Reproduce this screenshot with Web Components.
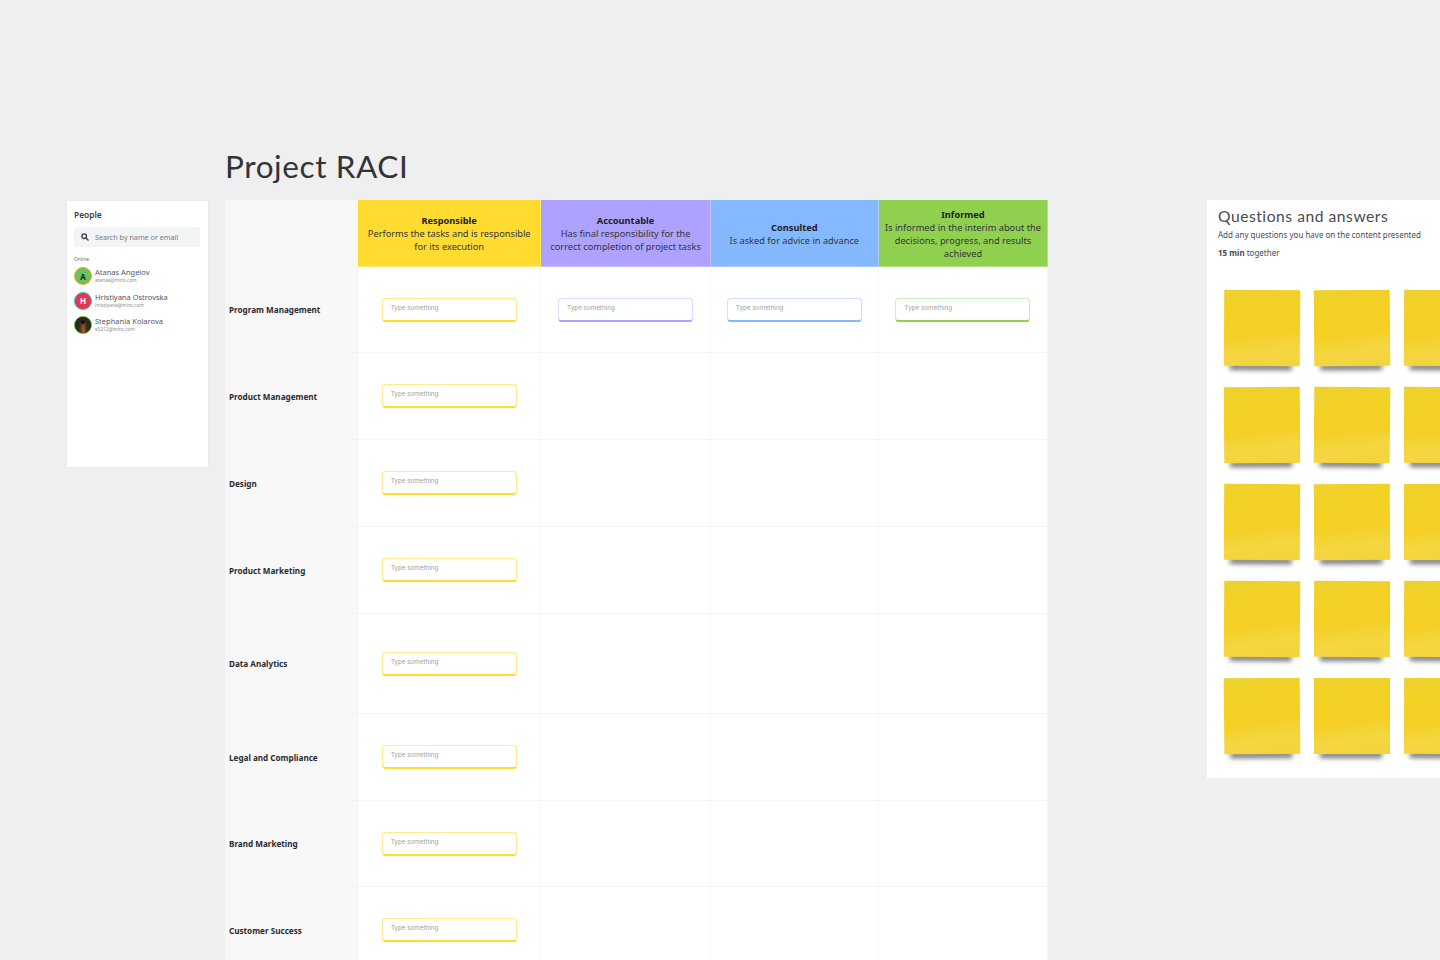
<!DOCTYPE html>
<html lang="en">
<head>
<meta charset="utf-8">
<title>Project RACI</title>
<style>
html, body {
  margin: 0;
  height: 960px;
  overflow: hidden;
  background: #efefef;
}
</style>
</head>
<body>
<raci-board></raci-board>

<script>
/* Small helper, every element below is just a shadow root with a template */
function makeTemplate (html) {
  const t = document.createElement('template')
  t.innerHTML = html
  return t
}

const personTemplate = makeTemplate(`
<style>
:host { display: flex; align-items: center; gap: 3px; height: 18px; }
#avatar {
  width: 18px;
  height: 18px;
  box-sizing: border-box;
  border-radius: 50%;
  border: 1.5px solid var(--ring, #f5a623);
  display: flex;
  align-items: center;
  justify-content: center;
  overflow: hidden;
  font: 700 8px "Noto Sans", sans-serif;
  flex: none;
}
#name { font: 400 7.5px/9px "Noto Sans", sans-serif; color: #55555c; margin-top: -1px; }
#mail { font: 400 4.9px/6px "Noto Sans", sans-serif; color: #8a8d9e; }
svg { display: block; width: 100%; height: 100%; }
</style>
<div id="avatar"><slot name="avatar"></slot></div>
<div>
  <div id="name"></div>
  <div id="mail"></div>
</div>`)

class RaciPerson extends HTMLElement {
  constructor () {
    super()
    this.attachShadow({ mode: 'open' }).appendChild(personTemplate.content.cloneNode(true))
  }

  connectedCallback () {
    const avatar = this.shadowRoot.getElementById('avatar')
    this.shadowRoot.getElementById('name').textContent = this.getAttribute('name')
    this.shadowRoot.getElementById('mail').textContent = this.getAttribute('mail')
    avatar.style.setProperty('--ring', this.getAttribute('ring'))
    avatar.style.background = this.getAttribute('fill')
    avatar.style.color = this.getAttribute('ink')
    if (this.hasAttribute('initial')) avatar.textContent = this.getAttribute('initial')
  }
}
customElements.define('raci-person', RaciPerson)

const peopleTemplate = makeTemplate(`
<style>
:host {
  display: block;
  box-sizing: border-box;
  height: 266px;
  padding: 8px 8px 0 7px;
  background: #fff;
  box-shadow: 0 0 2px rgba(0, 0, 0, 0.07);
  border-radius: 1px;
}
h2 { margin: 0; font: 600 8.4px/11px "Noto Sans", sans-serif; color: #3c3c44; }
#search {
  display: flex;
  align-items: center;
  gap: 6px;
  height: 20px;
  margin-top: 7px;
  padding-left: 7px;
  background: #f3f4f6;
  border-radius: 2px;
  font: 400 7.2px "Noto Sans", sans-serif;
  color: #787a85;
}
#online { margin: 9px 0 4px; font: 400 4.8px/7px "Noto Sans", sans-serif; color: #6f6f78; }
#list { display: flex; flex-direction: column; gap: 6.6px; }
</style>
<h2>People</h2>
<div id="search">
  <svg width="8" height="8" viewBox="0 0 8 8" fill="none" stroke="#33343c" stroke-width="1.3">
    <circle cx="3.2" cy="3.2" r="2.3"/><path d="M5 5l2.5 2.5"/>
  </svg>
  <span>Search by name or email</span>
</div>
<div id="online">Online</div>
<div id="list">
  <raci-person name="Atanas Angelov" mail="atanas@miro.com" initial="A" ring="#f5a623" fill="#6cc25f" ink="#1c2b1c"></raci-person>
  <raci-person name="Hristiyana Ostrovska" mail="hristiyana@miro.com" initial="H" ring="#23c8cf" fill="#e8344f" ink="#fff"></raci-person>
  <raci-person name="Stephania Kolarova" mail="s5212@miro.com" ring="#6fd13c" fill="#2d2418" ink="#fff">
    <svg slot="avatar" viewBox="0 0 15 15">
      <rect width="15" height="15" fill="#2a2a22"/>
      <path d="M4 15c0-5 .5-10 3.5-11S11 7 11.500 15z" fill="#5b3a1c"/>
      <path d="M6 15c0-3 .5-7 1.500-8s2 3 2 8z" fill="#8a5a2a"/>
      <circle cx="7.500" cy="4.500" r="2" fill="#1c130c"/>
    </svg>
  </raci-person>
</div>`)

class RaciPeople extends HTMLElement {
  constructor () {
    super()
    this.attachShadow({ mode: 'open' }).appendChild(peopleTemplate.content.cloneNode(true))
  }
}
customElements.define('raci-people', RaciPeople)

const headTemplate = makeTemplate(`
<style>
:host {
  display: flex;
  flex-direction: column;
  justify-content: center;
  box-sizing: border-box;
  padding: 1px 5px 0;
  text-align: center;
  font: 400 9.25px/13px "Noto Sans", sans-serif;
  color: #34343c;
  border-right: 1px solid rgba(255, 255, 255, 0.3);
  border-bottom: 1px solid rgba(255, 255, 255, 0.3);
}
b { font-weight: 700; color: #1d1d24; }
</style>
<b></b><span><slot></slot></span>`)

class RaciHead extends HTMLElement {
  constructor () {
    super()
    this.attachShadow({ mode: 'open' }).appendChild(headTemplate.content.cloneNode(true))
  }

  connectedCallback () {
    this.shadowRoot.querySelector('b').textContent = this.getAttribute('title')
    this.style.background = this.getAttribute('color')
  }
}
customElements.define('raci-head', RaciHead)

const inputTemplate = makeTemplate(`
<style>
:host {
  display: block;
  box-sizing: border-box;
  width: 135px;
  height: 24px;
  padding: 4px 8px 0;
  background: #fff;
  border: 1px solid var(--soft);
  border-bottom: 2px solid var(--strong);
  border-radius: 4px;
  box-shadow: 0 0 1px var(--soft);
  font: 400 6.3px/11px Inter, "Noto Sans", sans-serif;
  color: #a0a0a0;
}
</style>
Type something`)

class RaciInput extends HTMLElement {
  constructor () {
    super()
    this.attachShadow({ mode: 'open' }).appendChild(inputTemplate.content.cloneNode(true))
  }
}
customElements.define('raci-input', RaciInput)

const tableTemplate = makeTemplate(`
<style>
:host {
  display: grid;
  grid-template-columns: 133px 183.4px 169.4px 168px 169.4px;
  grid-template-rows: 67px 86px 87px 87px 87px 100px 87px 86px 87px;
  background: #fff;
}
.cell {
  box-sizing: border-box;
  display: flex;
  align-items: center;
  justify-content: center;
  border-right: 1px solid #f6f6f6;
  border-bottom: 1px solid #f4f4f4;
}
.label {
  justify-content: flex-start;
  padding-left: 4px;
  background: #f8f8f8;
  font: 700 8.15px "Noto Sans", sans-serif;
  color: #2a2a30;
}
</style>`)

const COLUMNS = [
  { title: 'Responsible', text: 'Performs the tasks and is responsible for its execution', color: '#ffdc2f', soft: '#ffeb8f' },
  { title: 'Accountable', text: 'Has final responsibility for the correct completion of project tasks', color: '#ada3ff', soft: '#e0dbff' },
  { title: 'Consulted', text: 'Is asked for advice in advance', color: '#84b8ff', soft: '#cfe2ff' },
  { title: 'Informed', text: 'Is informed in the interim about the decisions, progress, and results achieved', color: '#8fd14f', soft: '#d3efb8' }
]

const ROWS = ['Program Management', 'Product Management', 'Design', 'Product Marketing',
  'Data Analytics', 'Legal and Compliance', 'Brand Marketing', 'Customer Success']

class RaciTable extends HTMLElement {
  constructor () {
    super()
    this.shadow = this.attachShadow({ mode: 'open' })
    this.shadow.appendChild(tableTemplate.content.cloneNode(true))
  }

  connectedCallback () {
    // header row, first cell is empty
    this.shadow.appendChild(this._cell('label'))
    COLUMNS.forEach((col) => {
      const head = document.createElement('raci-head')
      head.setAttribute('title', col.title)
      head.setAttribute('color', col.color)
      head.textContent = col.text
      this.shadow.appendChild(head)
    })
    // only the first row is filled for all columns, the others just Responsible
    ROWS.forEach((name, r) => {
      const label = this._cell('label')
      label.textContent = name
      this.shadow.appendChild(label)
      COLUMNS.forEach((col, c) => {
        const cell = this._cell()
        if (r === 0 || c === 0) {
          const input = document.createElement('raci-input')
          input.style.setProperty('--soft', col.soft)
          input.style.setProperty('--strong', col.color)
          cell.appendChild(input)
        }
        this.shadow.appendChild(cell)
      })
    })
  }

  _cell (extra) {
    const div = document.createElement('div')
    div.className = extra ? 'cell ' + extra : 'cell'
    return div
  }
}
customElements.define('raci-table', RaciTable)

const stickyTemplate = makeTemplate(`
<style>
:host {
  display: block;
  position: relative;
  width: 76px;
  height: 76px;
}
#paper {
  position: absolute;
  inset: 0;
  background: linear-gradient(172deg, #eed12e 0%, #f4d124 30%, #f4d026 58%, #f5d643 78%, #f4d43a 100%);
}
#shade {
  position: absolute;
  left: 6px;
  right: 8px;
  bottom: -4px;
  height: 6px;
  background: rgba(0, 0, 0, 0.55);
  filter: blur(2.8px);
}
</style>
<div id="shade"></div>
<div id="paper"></div>`)

class RaciSticky extends HTMLElement {
  constructor () {
    super()
    this.attachShadow({ mode: 'open' }).appendChild(stickyTemplate.content.cloneNode(true))
  }
}
customElements.define('raci-sticky', RaciSticky)

const qaTemplate = makeTemplate(`
<style>
:host {
  display: block;
  box-sizing: border-box;
  width: 420px;
  height: 578px;
  padding: 7px 0 0 11px;
  background: #fff;
  color: #4a4a52;
}
h2 { margin: 0; font: 400 15.6px/19px Lato, Inter, sans-serif; color: #4a4a4e; letter-spacing: 0.55px; }
p { margin: 0; font: 400 8px/11px "Noto Sans", sans-serif; }
#sub { margin-top: 3px; }
#time { margin-top: 7px; }
#notes {
  display: grid;
  grid-template-columns: repeat(3, 76px);
  grid-auto-rows: 76px;
  column-gap: 14px;
  row-gap: 21px;
  margin: 32px 0 0 6px;
}
</style>
<h2>Questions and answers</h2>
<p id="sub">Add any questions you have on the content presented</p>
<p id="time"><b>15 min</b> together</p>
<div id="notes"></div>`)

class RaciQa extends HTMLElement {
  constructor () {
    super()
    this.shadow = this.attachShadow({ mode: 'open' })
    this.shadow.appendChild(qaTemplate.content.cloneNode(true))
  }

  connectedCallback () {
    const notes = this.shadow.getElementById('notes')
    // tilt values read off the reference, each note sits a little crooked
    const tilts = [0.4, -0.4, 0.3, -0.3, 0.5, 0.2, 0.3, -0.4, 0, 0.4, 0.2, 0.3, -0.5, 0, 0.3]
    for (let r = 0; r < 5; r++) {
      for (let c = 0; c < 3; c++) {
        const sticky = document.createElement('raci-sticky')
        sticky.style.transform = 'rotate(' + tilts[r * 3 + c] + 'deg)'
        notes.appendChild(sticky)
      }
    }
  }
}
customElements.define('raci-qa', RaciQa)

const boardTemplate = makeTemplate(`
<style>
:host {
  display: grid;
  grid-template-columns: 141px 822.8px 420px;
  grid-template-rows: 200px auto;
  column-gap: 17px;
  padding-left: 67px;
  height: 960px;
  overflow: hidden;
}
h1 {
  grid-column: 2;
  align-self: end;
  margin: 0 0 15px;
  font: 400 31.5px/38px Lato, Inter, sans-serif;
  color: #333338;
  letter-spacing: 0.6px;
}
raci-people { grid-row: 2; grid-column: 1; margin-top: 1px; align-self: start; }
raci-table { grid-row: 2; grid-column: 2; }
raci-qa { grid-row: 2; grid-column: 3; margin-left: 142.2px; align-self: start; }
</style>
<h1>Project RACI</h1>
<raci-people></raci-people>
<raci-table></raci-table>
<raci-qa></raci-qa>`)

class RaciBoard extends HTMLElement {
  constructor () {
    super()
    this.attachShadow({ mode: 'open' }).appendChild(boardTemplate.content.cloneNode(true))
  }
}
customElements.define('raci-board', RaciBoard)
</script>
</body>
</html>
